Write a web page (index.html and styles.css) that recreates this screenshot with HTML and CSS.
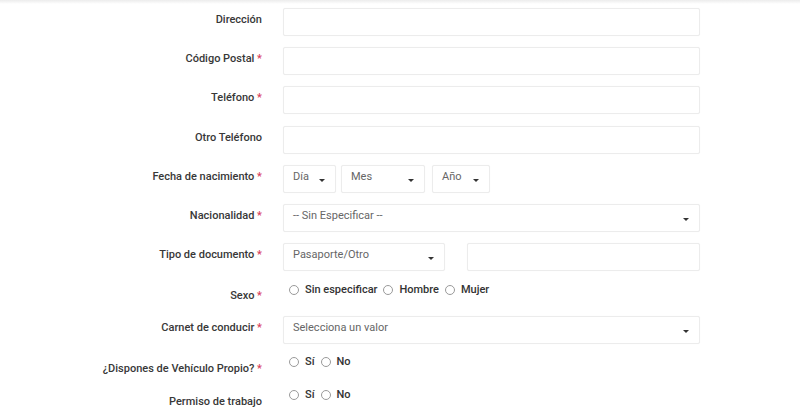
FILE: index.html
```html
<!DOCTYPE html>
<html lang="es">
<head>
    <meta charset="UTF-8">
    <meta name="viewport" content="width=device-width, initial-scale=1.0">
    <title>Datos personales</title>
    <link rel="stylesheet" href="styles.css">
</head>
<body>
    <div class="topbar"></div>
    <form class="form">
        <div class="row">
            <label class="label">Dirección</label>
            <div class="field"><input type="text" class="input"></div>
        </div>
        <div class="row">
            <label class="label">Código Postal <span class="req">*</span></label>
            <div class="field"><input type="text" class="input"></div>
        </div>
        <div class="row">
            <label class="label">Teléfono <span class="req">*</span></label>
            <div class="field"><input type="text" class="input"></div>
        </div>
        <div class="row">
            <label class="label">Otro Teléfono</label>
            <div class="field"><input type="text" class="input"></div>
        </div>
        <div class="row">
            <label class="label">Fecha de nacimiento <span class="req">*</span></label>
            <div class="field date">
                <div class="select day">Día<span class="caret"></span></div>
                <div class="select month">Mes<span class="caret"></span></div>
                <div class="select year">Año<span class="caret"></span></div>
            </div>
        </div>
        <div class="row">
            <label class="label">Nacionalidad <span class="req">*</span></label>
            <div class="field"><div class="select">-- Sin Especificar --<span class="caret"></span></div></div>
        </div>
        <div class="row">
            <label class="label">Tipo de documento <span class="req">*</span></label>
            <div class="field doc">
                <div class="select doc-type">Pasaporte/Otro<span class="caret"></span></div>
                <input type="text" class="input">
            </div>
        </div>
        <div class="row">
            <label class="label low">Sexo <span class="req">*</span></label>
            <div class="field radios sexo">
                <span class="radio"></span>Sin especificar
                <span class="radio"></span>Hombre
                <span class="radio"></span>Mujer
            </div>
        </div>
        <div class="row">
            <label class="label">Carnet de conducir <span class="req">*</span></label>
            <div class="field"><div class="select">Selecciona un valor<span class="caret"></span></div></div>
        </div>
        <div class="row">
            <label class="label low">¿Dispones de Vehículo Propio? <span class="req">*</span></label>
            <div class="field radios">
                <span class="radio"></span>Sí
                <span class="radio"></span>No
            </div>
        </div>
        <div class="row">
            <label class="label low">Permiso de trabajo</label>
            <div class="field radios">
                <span class="radio"></span>Sí
                <span class="radio"></span>No
            </div>
        </div>
    </form>
</body>
</html>
```

FILE: styles.css
```css
body {
    margin: 0;
    background-color: #fff;
    font-family: Roboto, "Liberation Sans", Arial, sans-serif;
    font-size: 11px;
    color: #383838;
    overflow: hidden;
}

.topbar {
    height: 4px;
    background: linear-gradient(#ececec, #fff);
}

.form {
    padding-top: 4px;
}

.row {
    display: grid;
    grid-template-columns: 262px 417px;
    column-gap: 21px;
    margin-bottom: 11.2px;
}

.label {
    text-align: right;
    font-weight: 500;
    line-height: 16px;
    padding-top: 4px;
    white-space: nowrap;
}

.label.low {
    padding-top: 6px;
}

.req {
    color: #d9405f;
}

.input,
.select {
    box-sizing: border-box;
    height: 28px;
    width: 100%;
    border: 1px solid #ececec;
    border-radius: 2px;
    box-shadow: 0 0 1px rgba(0, 0, 0, 0.06);
    background-color: #fff;
    font-family: inherit;
    font-size: 11px;
    color: #666;
    margin: 0;
}

.select {
    position: relative;
    line-height: 16px;
    padding: 3px 9px;
}

.caret {
    position: absolute;
    right: 10px;
    top: 13px;
    border-left: 3px solid transparent;
    border-right: 3px solid transparent;
    border-top: 3px solid #333;
}

.date {
    display: flex;
    gap: 5px;
}

.day {
    width: 53px;
}

.month {
    width: 84px;
}

.year {
    width: 58px;
    margin-left: 2px;
}

.doc {
    display: flex;
    gap: 22px;
}

.doc-type {
    width: 162px;
    flex: none;
}

.radios {
    display: flex;
    align-items: flex-start;
    min-height: 22px;
    line-height: 14px;
    font-weight: 500;
    color: #333;
}

.radios.sexo {
    padding-top: 1px;
    min-height: 21px;
}

.radio {
    box-sizing: border-box;
    width: 10px;
    height: 10px;
    border: 1px solid #9a9a9a;
    border-radius: 50%;
    margin: 2px 6px 0 6px;
}
```
